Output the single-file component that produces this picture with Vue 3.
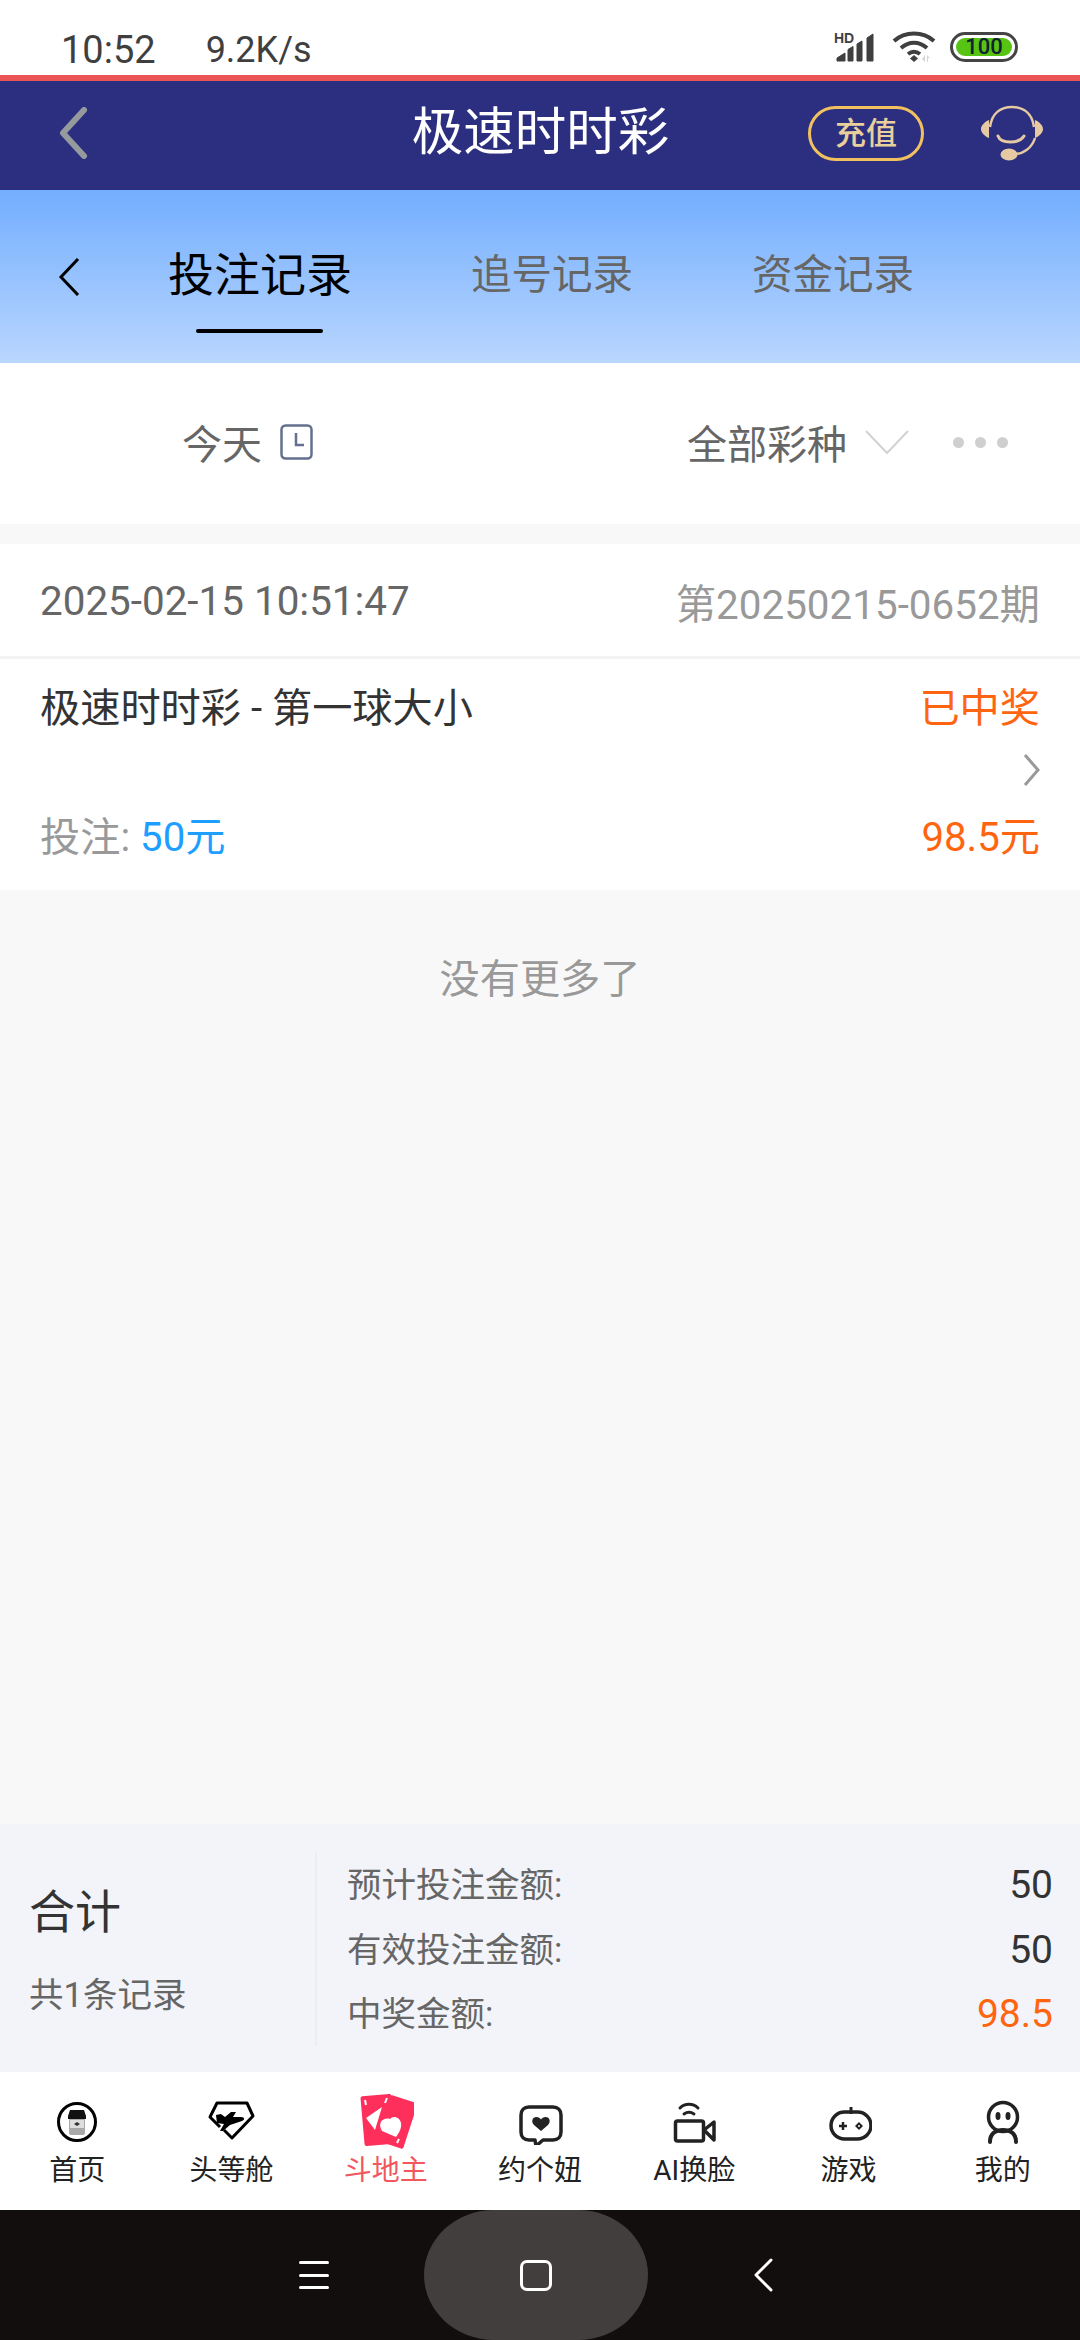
<script setup>
const tabs = [
  { label: '首页', icon: 'home' },
  { label: '头等舱', icon: 'plane' },
  { label: '斗地主', icon: 'cards', active: true },
  { label: '约个妞', icon: 'heart' },
  { label: 'AI换脸', icon: 'camera' },
  { label: '游戏', icon: 'game' },
  { label: '我的', icon: 'me' }
]
const rows = [
  { label: '预计投注金额:', value: '50' },
  { label: '有效投注金额:', value: '50' },
  { label: '中奖金额:', value: '98.5', hot: true }
]
</script>

<template>
  <div class="page">
    <div class="status">
      <span class="time">10:52</span>
      <span class="speed">9.2K/s</span>
      <div class="status-icons">
        <svg class="sig" width="44" height="36" viewBox="0 0 44 36">
          <text x="0" y="14" class="hd">HD</text>
          <path d="M3 32v-3l8-5v8zM14 32V20.500l5-3V32zM23 32V15l5-3v20zM33 32V9l6-4v27z" fill="#3f3f3f" stroke="#3f3f3f" stroke-linejoin="round"/>
        </svg>
        <svg width="44" height="32" viewBox="0 0 44 32">
          <path d="M2 10C13 0 31 0 42 10M9 17c8-7 18-7 26 0M16 23c4-3 8-3 12 0" fill="none" stroke="#3f3f3f" stroke-width="4"/>
          <path d="M22 24l4 3.500-4 3.500-4-3.500z" fill="#3f3f3f"/>
          <path d="M33 24v7l-3-3zM35 24l3 3h-2v4h-1z" fill="#d4d4d4"/>
        </svg>
        <div class="battery"><div class="level">100</div></div>
      </div>
    </div>

    <header class="head">
      <svg class="head-back" width="29" height="52" viewBox="0 0 29 52">
        <path d="M25 3L4 26l21 23" fill="none" stroke="#959a9c" stroke-width="6" stroke-linecap="round" stroke-linejoin="round"/>
      </svg>
      <div class="head-title">极速时时彩</div>
      <div class="head-right">
        <div class="recharge">充值</div>
        <svg width="64" height="56" viewBox="0 0 64 56">
          <path d="M10 22C12 8 21 2 32 2s20 6 22 20" fill="none" stroke="#e6c9a3" stroke-width="2.500"/>
          <path d="M9 15v18C4 31 1 27 1 24s3-7 8-9zM55 15v18c5-2 8-6 8-9s-3-7-8-9z" fill="#e6c9a3"/>
          <path d="M18 31c3 8 21 8 26 0" fill="none" stroke="#e6c9a3" stroke-width="3" stroke-linecap="round"/>
          <path d="M55 33c-3 10-12 16-20 16" fill="none" stroke="#e6c9a3" stroke-width="2.500"/>
          <ellipse cx="29" cy="49.500" rx="8.500" ry="6" fill="#e6c9a3"/>
        </svg>
      </div>
    </header>

    <nav class="tabs">
      <svg class="tabs-back" width="22" height="38" viewBox="0 0 22 38">
        <path d="M20 1L3 19l17 18" fill="none" stroke="#000" stroke-width="3"/>
      </svg>
      <div class="tab tab-on">投注记录<span class="bar"></span></div>
      <div class="tab tab-2">追号记录</div>
      <div class="tab tab-3">资金记录</div>
    </nav>

    <section class="filter">
      <div class="filter-item">
        <span>今天</span>
        <svg width="33" height="36" viewBox="0 0 33 36">
          <rect x="1.500" y="1.500" width="30" height="33" rx="4" fill="none" stroke="#63718f" stroke-width="2.500"/>
          <path d="M16 9v12h8" fill="none" stroke="#63718f" stroke-width="2.500"/>
        </svg>
      </div>
      <div class="filter-right">
        <span>全部彩种</span>
        <svg class="chev" width="44" height="24" viewBox="0 0 44 24">
          <path d="M1 1l21 22L43 1" fill="none" stroke="#d2d2d2" stroke-width="2"/>
        </svg>
        <div class="dots"><i></i><i></i><i></i></div>
      </div>
    </section>

    <section class="record">
      <div class="record-top">
        <span class="date">2025-02-15 10:51:47</span>
        <span class="issue">第20250215-0652期</span>
      </div>
      <div class="record-body">
        <div class="line">
          <span class="game">极速时时彩 - 第一球大小</span>
          <span class="hot">已中奖</span>
        </div>
        <svg class="more" width="17" height="32" viewBox="0 0 17 32">
          <path d="M2 1l13 15L2 31" fill="none" stroke="#999" stroke-width="3"/>
        </svg>
        <div class="line">
          <span class="bet">投注: <b>50元</b></span>
          <span class="hot">98.5元</span>
        </div>
      </div>
    </section>

    <main class="rest">没有更多了</main>

    <section class="summary">
      <div class="sum-left">
        <div class="sum-title">合计</div>
        <div class="sum-count">共1条记录</div>
      </div>
      <div class="sum-right">
        <div v-for="r in rows" :key="r.label" class="sum-row">
          <span class="sum-label">{{ r.label }}</span>
          <span :class="['sum-val', { 'sum-hot': r.hot }]">{{ r.value }}</span>
        </div>
      </div>
    </section>

    <footer class="tabbar">
      <div v-for="t in tabs" :key="t.label" :class="['tb', { 'tb-on': t.active }]">
        <svg v-if="t.icon === 'home'" class="ic" width="46" height="46" viewBox="0 0 46 46">
          <circle cx="23" cy="23" r="18.500" fill="none" stroke="#000" stroke-width="3"/>
          <rect x="15" y="19" width="16" height="17" rx="2" fill="#a9a9a9"/>
          <rect x="16" y="21" width="14" height="8" fill="#dedede"/>
          <path d="M23 23l3 2-3 2-3-2z" fill="#333"/>
          <path d="M14 17h18v3H14zM16 11h14l2 6H14z" fill="#111"/>
        </svg>
        <svg v-else-if="t.icon === 'plane'" class="ic" width="48" height="46" viewBox="0 0 48 46">
          <path d="M13 28L3 18 10 4H40L46 17 25 39 17 31" fill="none" stroke="#000" stroke-width="3" stroke-linejoin="round"/>
          <path d="M9 16l5-1 4 3 6-5h5l-3 5 8 0c4 0 4 3 1 4l-12 4-7 6h-3l4-7-7-1z" fill="#000"/>
        </svg>
        <svg v-else-if="t.icon === 'cards'" class="ic cards" width="56" height="56" viewBox="0 0 56 56">
          <rect x="-14" y="-24" width="28" height="48" rx="2" transform="translate(39 29) rotate(18)" fill="#ff2f5b"/>
          <rect x="-15.500" y="-25" width="31" height="50" rx="2" transform="translate(20 27) rotate(-5)" fill="#ff2f5b"/>
          <path d="M8 25l16-11-7 23z" fill="#fff"/>
          <path d="M38 44l-14-6c-5-8 1-14 8-12 3-4 10-2 11 4 1 5-2 10-5 14z" fill="#fff"/>
          <path d="M7 7l1 5M29 5l-2 5M41 46l-2 4" stroke="#fff" stroke-width="2" fill="none"/>
        </svg>
        <svg v-else-if="t.icon === 'heart'" class="ic" width="46" height="46" viewBox="0 0 46 46">
          <path d="M12 8h24c5 0 8 3 8 8v17c0 5-3 8-8 8H26l-7 6-1-6h-6c-5 0-8-3-8-8V16c0-5 3-8 8-8z" fill="none" stroke="#222" stroke-width="3.500" stroke-linejoin="round"/>
          <path d="M24 32l-7-6c-3-3-2-8 2.500-8 2 0 3.500 1 4.500 2.500 1-1.500 2.500-2.500 4.500-2.500 4.500 0 5.500 5 2.500 8z" fill="#222"/>
        </svg>
        <svg v-else-if="t.icon === 'camera'" class="ic" width="46" height="46" viewBox="0 0 46 46">
          <path d="M9 9c5-5 13-5 18 0M13 15c3-2 7-2 10 0" fill="none" stroke="#222" stroke-width="3" stroke-linecap="round"/>
          <rect x="4.500" y="22" width="28" height="20" rx="2" fill="none" stroke="#222" stroke-width="3.500"/>
          <path d="M33 31l10-8v18z" fill="none" stroke="#222" stroke-width="3.500" stroke-linejoin="round"/>
        </svg>
        <svg v-else-if="t.icon === 'game'" class="ic" width="46" height="46" viewBox="0 0 46 46">
          <path d="M25 8v7" stroke="#222" stroke-width="3"/>
          <rect x="5" y="13" width="40" height="27" rx="13.500" fill="none" stroke="#222" stroke-width="3.500"/>
          <path d="M13 27h8M17 23v8" stroke="#222" stroke-width="2.500"/>
          <path d="M33 23l4 4-4 4-4-4z" fill="#222"/>
          <circle cx="33" cy="27" r="1" fill="#fff"/>
        </svg>
        <svg v-else class="ic" width="46" height="46" viewBox="0 0 46 46">
          <circle cx="23" cy="18" r="14.500" fill="none" stroke="#222" stroke-width="3.500"/>
          <ellipse cx="18" cy="17" rx="2.500" ry="4" fill="#222"/>
          <ellipse cx="28" cy="17" rx="2.500" ry="4" fill="#222"/>
          <path d="M10 43c0-9 6-12 13-12s13 3 13 12" fill="none" stroke="#222" stroke-width="4" stroke-linecap="round"/>
        </svg>
        <span class="tb-label">{{ t.label }}</span>
      </div>
    </footer>

    <div class="sysnav">
      <div class="menu"><i></i><i></i><i></i></div>
      <div class="pill"><span class="sq"></span></div>
      <svg width="20" height="34" viewBox="0 0 20 34">
        <path d="M18 2L3 17l15 15" fill="none" stroke="#fff" stroke-width="3" stroke-linecap="round" stroke-linejoin="round"/>
      </svg>
    </div>
  </div>
</template>

<style scoped>
.page {
  width: 1080px;
  height: 2340px;
  display: flex;
  flex-direction: column;
  background: #f8f8f8;
  font-family: Roboto, "Noto Sans CJK SC", sans-serif;
  overflow: hidden;
}
.status {
  height: 75px;
  flex: none;
  background: #fff;
  display: flex;
  align-items: center;
  padding: 24px 62px 0 61px;
  box-sizing: border-box;
  color: #3f3f3f;
  font-size: 36px;
}
.time { font-size: 38px; }
.speed { margin-left: 50px; }
.status-icons {
  margin-left: auto;
  display: flex;
  align-items: center;
  gap: 14px;
  margin-top: -6px;
}
.hd { font: 700 14px "Liberation Sans", sans-serif; fill: #3f3f3f; }
.battery {
  width: 68px;
  height: 30px;
  box-sizing: border-box;
  border: 3px solid #444;
  border-radius: 15px;
  padding: 3px;
  background: #fff;
}
.level {
  height: 100%;
  background: #57c312;
  border-radius: 9px;
  color: #123;
  font: 500 22px/18px Roboto, sans-serif;
  text-align: center;
}
.head {
  height: 115px;
  flex: none;
  box-sizing: border-box;
  border-top: 6px solid #ea5455;
  background: #2c2f7f;
  display: grid;
  grid-template-columns: 1fr auto 1fr;
  align-items: center;
  padding: 0 36px 5px 37px;
}
.head-back { margin-left: 22px; }
.head-title { color: #fff; font-size: 51.500px; line-height: 1; }
.head-right {
  justify-self: end;
  display: flex;
  align-items: center;
  gap: 56px;
}
.recharge {
  width: 116px;
  height: 55px;
  box-sizing: border-box;
  border: 3px solid #f1c160;
  border-radius: 28px;
  color: #e9cf9c;
  font-size: 31px;
  font-weight: 500;
  line-height: 49px;
  text-align: center;
}
.tabs {
  height: 173px;
  flex: none;
  background: linear-gradient(#73aefe, #b9d6fe);
  display: flex;
  align-items: center;
  padding: 0 0 4px 58px;
  color: #666;
  box-sizing: border-box;
}
.tabs-back { margin-top: 4px; }
.tab { font-size: 40.500px; line-height: 50px; position: relative; white-space: nowrap; }
.tab-on { color: #000; font-size: 46px; margin-left: 88px; }
.tab-2 { margin-left: 119px; }
.tab-3 { margin-left: 119px; }
.bar {
  position: absolute;
  left: 28px;
  right: 29px;
  top: 79px;
  height: 4px;
  border-radius: 2px;
  background: #000;
}
.filter {
  height: 161px;
  flex: none;
  box-sizing: border-box;
  background: #fff;
  display: flex;
  align-items: center;
  justify-content: space-between;
  padding: 0 72px 3px 182px;
  font-size: 40px;
  color: #666;
}
.filter-item, .filter-right { display: flex; align-items: center; }
.filter-item svg { margin-left: 18px; }
.chev { margin-left: 18px; }
.dots { display: flex; gap: 11px; margin-left: 44px; }
.dots i { width: 11px; height: 11px; border-radius: 50%; background: #cfcfcf; }
.record {
  margin-top: 20px;
  background: #fff;
  flex: none;
}
.record-top {
  height: 112px;
  box-sizing: border-box;
  padding: 2px 40px 0;
  display: flex;
  align-items: center;
  justify-content: space-between;
  font-size: 40.400px;
}
.date { color: #666; }
.issue { color: #999; }
.record-body {
  border-top: 3px solid #f3f3f3;
  height: 234px;
  box-sizing: border-box;
  padding: 25px 40px 0;
  display: flex;
  flex-direction: column;
}
.line {
  display: flex;
  justify-content: space-between;
  font-size: 40.200px;
  line-height: 50px;
  color: #333;
}
.more { align-self: flex-end; margin: 20px 0 27px; }
.hot { color: #ff6510; }
.bet { color: #999; }
.bet b { font-weight: 400; color: #1e9fff; }
.rest {
  flex: 1;
  min-height: 0;
  text-align: center;
  font-size: 40.200px;
  color: #999;
  padding-top: 65px;
  line-height: 50px;
}
.summary {
  height: 248px;
  flex: none;
  background: #f2f4fa;
  display: flex;
  align-items: center;
  box-sizing: border-box;
  padding: 0 27px 0 29px;
}
.sum-left { width: 286px; flex: none; padding-top: 2px; }
.sum-title { font-size: 46px; line-height: 60px; color: #333; }
.sum-count { font-size: 34.500px; line-height: 44px; color: #666; margin-top: 31px; }
.sum-right {
  flex: 1;
  border-left: 2px solid #ebedf2;
  height: 193px;
  padding-left: 30px;
  display: flex;
  flex-direction: column;
  justify-content: space-between;
  margin-top: 2px;
  padding-top: 1px;
}
.sum-row {
  display: flex;
  justify-content: space-between;
  align-items: center;
  line-height: 64px;
}
.sum-label { font-size: 34.500px; color: #666; }
.sum-val { font-size: 39px; color: #333; }
.sum-hot { color: #ff6510; }
.tabbar {
  height: 138px;
  flex: none;
  background: #fff;
  display: grid;
  grid-template-columns: repeat(7, 1fr);
}
.tb {
  display: flex;
  flex-direction: column;
  align-items: center;
  color: #222;
  font-size: 28px;
}
.ic { margin-top: 27px; height: 46px; flex: none; }
.cards { margin-top: 21px; height: 56px; margin-bottom: -4px; }
.tb-label { margin-top: 7px; line-height: 38px; }
.tb-on { color: #f3565d; }
.sysnav {
  height: 130px;
  flex: none;
  background: #120e0e;
  display: flex;
  align-items: center;
  padding-left: 299px;
}
.menu { width: 30px; display: flex; flex-direction: column; gap: 9.500px; }
.menu i { height: 3px; border-radius: 2px; background: #fff; }
.pill {
  width: 224px;
  height: 130px;
  margin: 0 105px 0 95px;
  background: #423e3d;
  border-radius: 70px / 65px;
  display: flex;
  align-items: center;
  justify-content: center;
}
.sq {
  width: 32px;
  height: 31px;
  box-sizing: border-box;
  border: 3px solid #fff;
  border-radius: 7px;
}
</style>
